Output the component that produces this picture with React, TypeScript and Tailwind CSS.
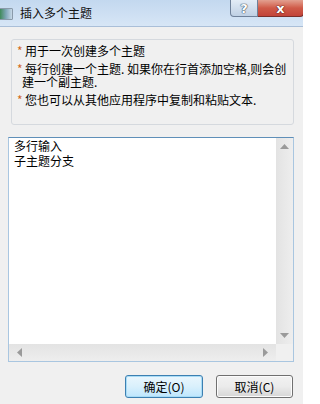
import React from "react";

const font = { fontFamily: '"Noto Sans CJK SC", "Noto Sans", sans-serif' };

function Star() {
  return <span className="inline-block w-[8px] text-[#d2691e] text-[12px] leading-[13px]">*</span>;
}

export default function App() {
  return (
    <div className="w-[303px] h-[404px] bg-[#f0f0f0] overflow-hidden text-black text-[12px]" style={font}>
      {/* title bar */}
      <div className="relative h-[27px] bg-gradient-to-b from-[#c3d8ef] to-[#d7e6f6] border-b border-[#aabfd8] flex items-center">
        <div className="ml-[-1px] mt-[1px] w-[14px] h-[12px] border border-[#8a9aaa] bg-gradient-to-r from-[#3f8a5a] via-[#7fa7b8] to-[#c8d8e8] rounded-[1px]" />
        <span className="ml-[7px] leading-[14px] text-[12px] text-[#111]">插入多个主题</span>
        <div className="absolute left-[230px] top-0 w-[28px] h-[17px] border border-t-0 border-[#6f819a] rounded-bl-[4px] bg-gradient-to-b from-[#e3ecf6] to-[#bfd0e4] flex items-center justify-center">
          <span className="text-white font-bold text-[13px] leading-[13px] [text-shadow:0_0_1px_#3a4a5a,0_0_1px_#3a4a5a,0_0_1px_#3a4a5a]" style={{ fontFamily: '"DejaVu Sans", sans-serif' }}>?</span>
        </div>
        <div className="absolute left-[258px] top-0 w-[46px] h-[17px] border border-t-0 border-l-0 border-[#7a2f2a] rounded-br-[4px] bg-gradient-to-b from-[#e2a090] via-[#cf5a48] to-[#c2443a] flex items-center justify-center">
          <span className="text-white font-bold text-[13px] leading-[13px] [text-shadow:0_0_1px_#5a1a14,0_0_1px_#5a1a14,0_0_1px_#5a1a14]" style={{ fontFamily: '"DejaVu Sans", sans-serif' }}>x</span>
        </div>
      </div>

      {/* info box */}
      <div className="mt-[12px] ml-[11px] mr-[9px] h-[86px] border border-[#d5d9de] rounded-[3px] bg-[#f0f0f0] pt-[4px] pl-[5px] leading-[13px] whitespace-nowrap">
        <div className="flex"><Star /><span>用于一次创建多个主题</span></div>
        <div className="flex mt-[5px]"><Star /><span>每行创建一个主题. 如果你在行首添加空格,则会创</span></div>
        <div className="pl-[5px]">建一个副主题.</div>
        <div className="flex mt-[5px]"><Star /><span>您也可以从其他应用程序中复制和粘贴文本.</span></div>
      </div>

      {/* text area */}
      <div className="mt-[12px] ml-[8px] w-[286px] h-[225px] border border-[#a9c6e0] border-t-[#5f8fb8] bg-white flex flex-col">
        <div className="flex flex-1 min-h-0">
          <div className="flex-1 pl-[5px] leading-[15px] text-[12px]">
            <div>多行输入</div>
            <div>子主题分支</div>
          </div>
          <div className="w-[17px] bg-gradient-to-r from-[#e3e3e3] to-[#eeeeee] flex flex-col items-center justify-between py-[6px]">
            <svg width="9" height="5" viewBox="0 0 9 5"><path d="M0 5 L4.5 0 L9 5 Z" fill="#9a9a9a" /></svg>
            <svg width="9" height="5" viewBox="0 0 9 5"><path d="M0 0 L4.5 5 L9 0 Z" fill="#9a9a9a" /></svg>
          </div>
        </div>
        <div className="flex h-[17px]">
          <div className="flex-1 bg-gradient-to-b from-[#e3e3e3] to-[#eeeeee] flex items-center justify-between px-[8px]">
            <svg width="5" height="9" viewBox="0 0 5 9"><path d="M5 0 L0 4.5 L5 9 Z" fill="#9a9a9a" /></svg>
            <svg width="5" height="9" viewBox="0 0 5 9"><path d="M0 0 L5 4.5 L0 9 Z" fill="#9a9a9a" /></svg>
          </div>
          <div className="w-[17px] bg-[#f0f0f0]" />
        </div>
      </div>

      {/* buttons */}
      <div className="mt-[13px] flex justify-end gap-[13px] pr-[10px]">
        <button className="w-[78px] h-[23px] rounded-[3px] border border-[#3c7fb1] bg-gradient-to-b from-[#eaf6fd] via-[#d9f0fc] to-[#bee6fd] text-[12px] leading-[14px] text-black [box-shadow:inset_0_0_0_1px_#a8dcf6]">
          确定(O)
        </button>
        <button className="w-[77px] h-[23px] rounded-[3px] border border-[#707070] bg-gradient-to-b from-[#f2f2f2] via-[#ebebeb] to-[#d6d6d6] text-[12px] leading-[14px] text-black [box-shadow:inset_0_0_0_1px_#fcfcfc]">
          取消(C)
        </button>
      </div>
    </div>
  );
}
